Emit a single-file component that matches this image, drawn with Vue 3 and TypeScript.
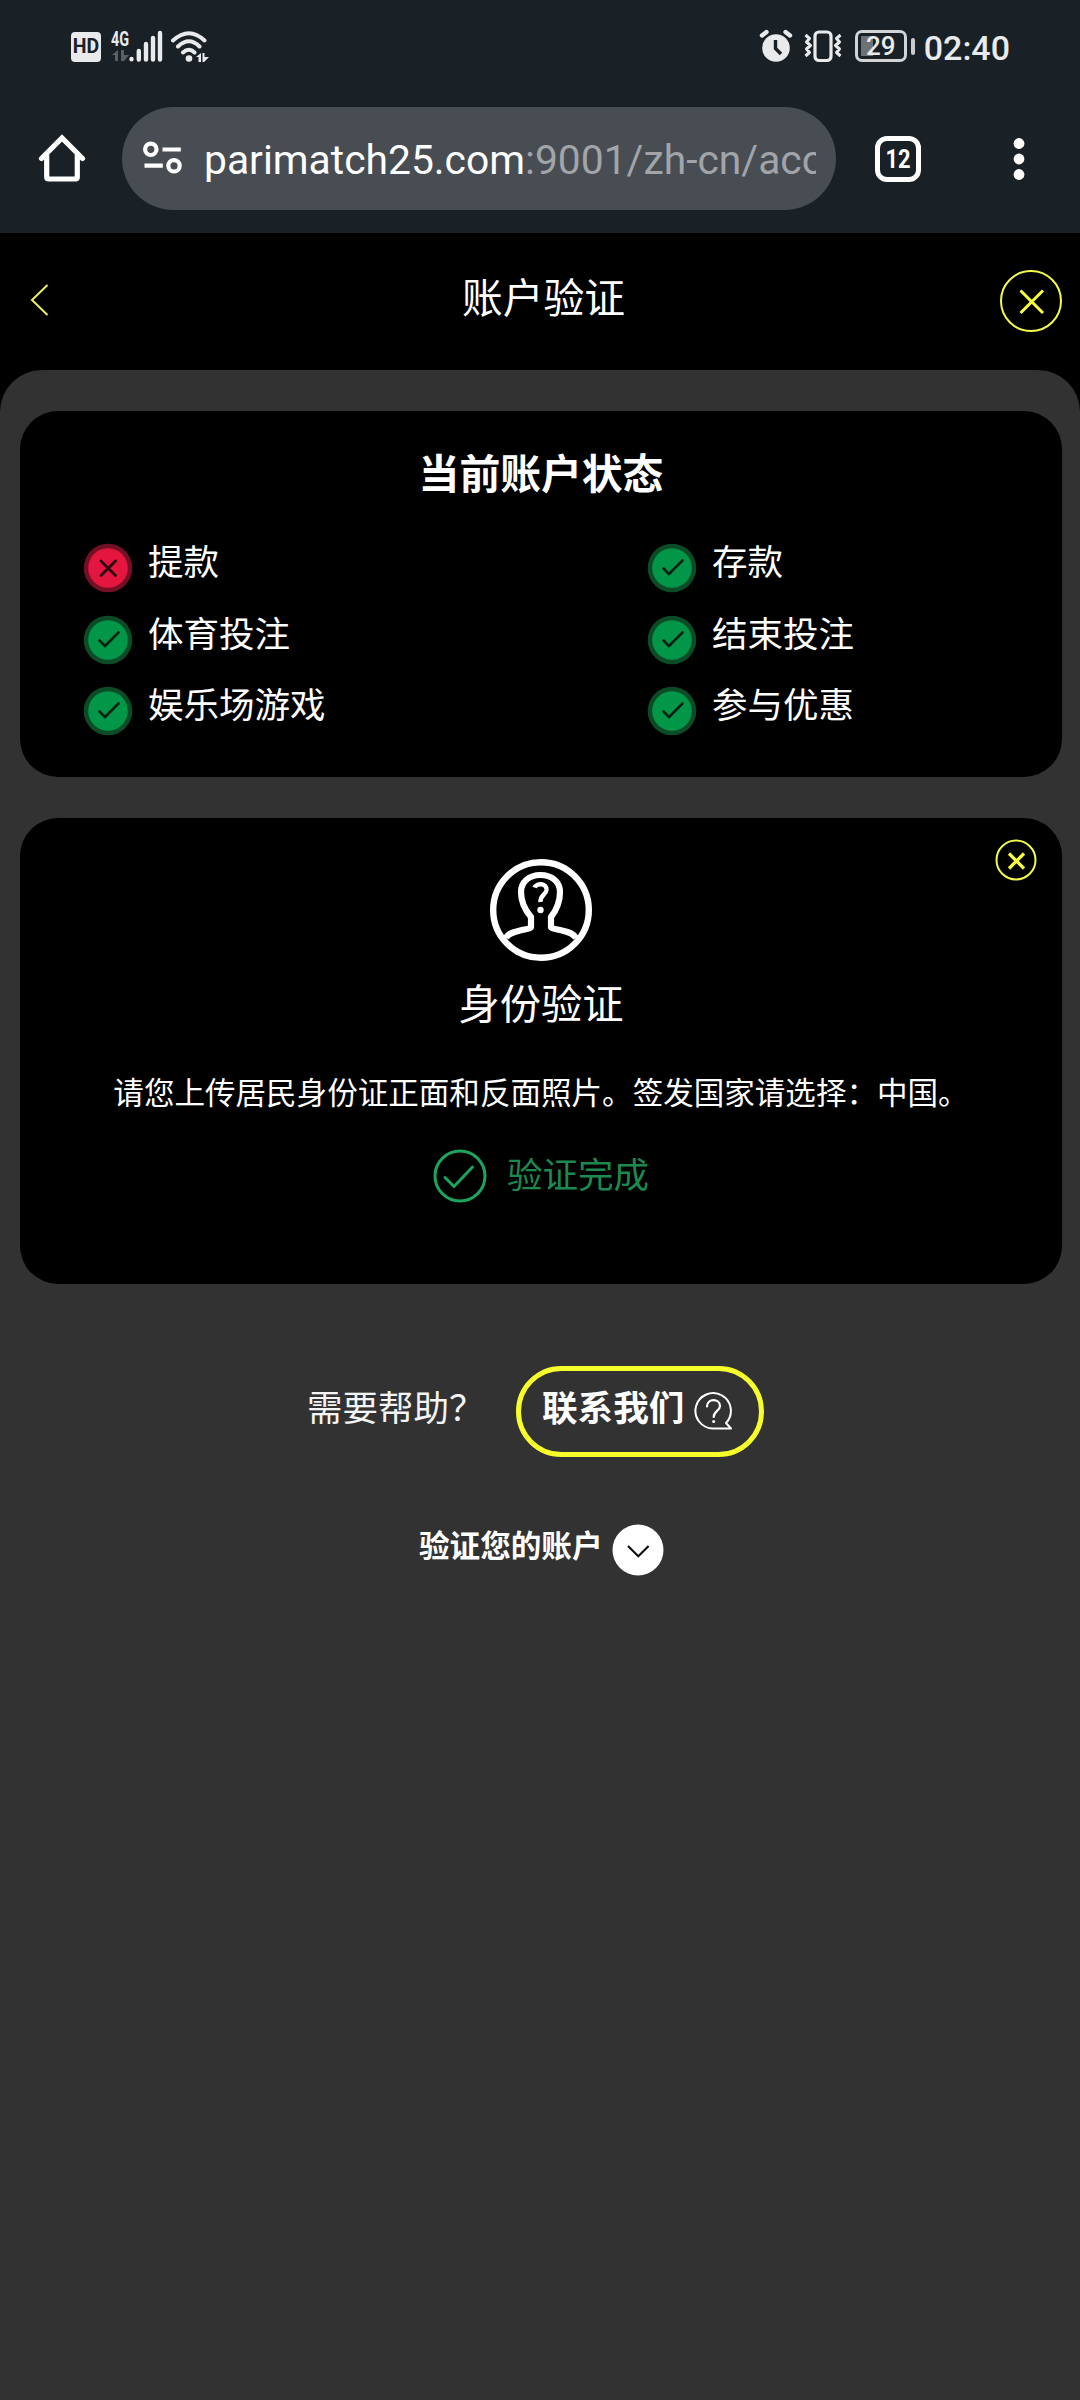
<script setup lang="ts">
interface StatusItem {
  label: string
  allowed: boolean
}

const statusItems: StatusItem[] = [
  { label: '提款', allowed: false },
  { label: '存款', allowed: true },
  { label: '体育投注', allowed: true },
  { label: '结束投注', allowed: true },
  { label: '娱乐场游戏', allowed: true },
  { label: '参与优惠', allowed: true },
]
</script>

<template>
  <div class="screen" lang="zh-CN">
    <header class="chrome">
      <div class="status-bar">
        <div class="status-left">
          <span class="hd">HD</span>
          <div class="signal">
            <span class="network">4G</span>
            <svg width="52" height="34" viewBox="0 0 52 34">
              <g fill="#5b6065">
                <path d="M1 26l6-5v11H4v-6zM10 21h3v5h5l-5 6h-3z" />
              </g>
              <g stroke="#e8eaec" stroke-width="4.4" stroke-linecap="round">
                <path d="M20.5 30v.2M27.8 22v8.5M35 15v15.500M42 9v21.500M49 4v26.500" />
              </g>
            </svg>
          </div>
          <svg class="wifi" width="40" height="34" viewBox="0 0 40 34">
            <g fill="none" stroke="#e8eaec" stroke-width="4" stroke-linecap="round">
              <path d="M3 11.500Q19 -3 34.500 11.500M8 17.500Q19 7 29.500 17.500M13 23.500Q19 18 24.500 23.500" />
            </g>
            <circle cx="19" cy="29.500" r="3.300" fill="#e8eaec" />
            <path d="M26 28l5-4v9h-2.500v-5zM32.500 24h2v4h4.500l-5 5h-1.500z" fill="#e8eaec" />
          </svg>
        </div>
        <div class="status-right">
          <svg width="34" height="34" viewBox="0 0 34 34">
            <circle cx="17" cy="19" r="13.800" fill="#e8eaec" />
            <path d="M3 6.500L7.500 3M31 6.500L26.500 3" stroke="#e8eaec" stroke-width="4.400" stroke-linecap="round" />
            <path d="M16.500 11v8.500l5.500 5.500" fill="none" stroke="#192127" stroke-width="3.400" />
          </svg>
          <svg class="vibrate" width="40" height="34" viewBox="0 0 40 34">
            <rect x="12" y="3" width="16" height="28.500" rx="4" fill="none" stroke="#e8eaec" stroke-width="3.200" />
            <path
              d="M2.500 6l4 3.500-3 3.500 4 3.500-4 3.500 3 3.500-4 3.500M37.500 6l-4 3.500 3 3.500-4 3.500 4 3.500-3 3.500 4 3.500"
              fill="none"
              stroke="#e8eaec"
              stroke-width="3"
              stroke-linejoin="round"
            />
          </svg>
          <div class="battery">
            <span class="battery-text">29</span>
          </div>
          <span class="battery-knob"></span>
          <span class="clock">02:40</span>
        </div>
      </div>

      <div class="toolbar">
        <svg class="home" width="48" height="48" viewBox="0 0 48 48">
          <path
            d="M3.500 24.500L24 4l20.500 20.500M8.700 20v23q0 2 2 2h26.600q2 0 2-2V20"
            fill="none"
            stroke="#fff"
            stroke-width="5.200"
            stroke-linecap="round"
          />
        </svg>
        <div class="omnibox">
          <svg class="tune" width="40" height="36" viewBox="0 0 40 36">
            <g fill="none" stroke="#fff" stroke-width="4.200">
              <circle cx="8.800" cy="9.300" r="5.700" />
              <circle cx="32" cy="25.800" r="5.700" />
              <path d="M20.500 9.500h18.300M2.500 25.700h18.300" />
            </g>
          </svg>
          <div class="url">
            <span class="host">parimatch25.com</span>
            <span class="path">:9001/zh-cn/acc</span>
          </div>
        </div>
        <div class="tabs"><span class="tab-count">12</span></div>
        <svg class="menu" width="12" height="44" viewBox="0 0 12 44">
          <g fill="#fff">
            <circle cx="6" cy="6.500" r="5.400" />
            <circle cx="6" cy="22" r="5.400" />
            <circle cx="6" cy="37.500" r="5.400" />
          </g>
        </svg>
      </div>
    </header>

    <div class="page-head">
      <svg class="back" width="20" height="34" viewBox="0 0 20 34">
        <path d="M17.500 2L2 17l15.500 15" fill="none" stroke="#e9f05a" stroke-width="2" />
      </svg>
      <h1>账户验证</h1>
      <svg class="close-lg" width="64" height="64" viewBox="0 0 64 64">
        <circle cx="32" cy="32" r="30" fill="none" stroke="#f3fa4c" stroke-width="2" />
        <path d="M21.500 21.500L44 44M44 21.500L21.500 44" stroke="#f8ff3c" stroke-width="3" />
      </svg>
    </div>

    <main class="panel">
      <section class="card status-card">
        <h2>当前账户状态</h2>
        <ul class="status-grid">
          <li v-for="item in statusItems" :key="item.label">
            <svg width="50" height="50" viewBox="0 0 50 50">
              <template v-if="item.allowed">
                <circle cx="25" cy="25" r="24.300" fill="#0b4c27" />
                <circle cx="25" cy="25" r="19.800" fill="#029748" />
                <path
                  d="M16.500 25.500l5.500 5.500 13.500-13.500"
                  fill="none"
                  stroke="#06200f"
                  stroke-width="2.600"
                  stroke-linecap="round"
                  stroke-linejoin="round"
                />
              </template>
              <template v-else>
                <circle cx="25" cy="25" r="24.300" fill="#741023" />
                <circle cx="25" cy="25" r="19.800" fill="#e4163f" />
                <path
                  d="M18 18l14.500 14.500M32.500 18L18 32.500"
                  stroke="#2a060d"
                  stroke-width="2.800"
                  stroke-linecap="round"
                />
              </template>
            </svg>
            <span>{{ item.label }}</span>
          </li>
        </ul>
      </section>

      <section class="card identity-card">
        <svg class="close-sm" width="42" height="42" viewBox="0 0 42 42">
          <circle cx="21" cy="21" r="19.500" fill="none" stroke="#f3fa4c" stroke-width="2" />
          <path d="M14 14.500L29 29.500M29 14.500L14 29.500" stroke="#f8ff3c" stroke-width="3.200" />
        </svg>
        <svg class="avatar" width="104" height="104" viewBox="0 0 104 104">
          <g fill="none" stroke="#fff">
            <circle cx="52" cy="52" r="47.800" stroke-width="6.400" />
            <path
              d="M17 80C19 75 25 74 31 72.500C37 71 42 70.500 42 69V59C36 52 32 44 32 34C32 24 40 17 51.500 17S71 24 71 34C71 44 67.500 52 62 59V69C62 70.500 67 71 73 72.500C79 74 84 75 87 80"
              stroke-width="6.200"
            />
            <path
              d="M45.500 29.500C47 25 58 24.500 57.500 32C57 37 51 37 51.500 44"
              stroke-width="4.400"
            />
          </g>
          <circle cx="51.500" cy="52" r="3.200" fill="#fff" />
        </svg>
        <h3>身份验证</h3>
        <p class="note">请您上传居民身份证正面和反面照片。签发国家请选择：中国。</p>
        <div class="verified">
          <svg width="54" height="54" viewBox="0 0 54 54">
            <circle cx="27" cy="27" r="25" fill="none" stroke="#1ca45c" stroke-width="3" />
            <path
              d="M12 28.500l9 9L39.500 18"
              fill="none"
              stroke="#1ca45c"
              stroke-width="3"
              stroke-linecap="round"
              stroke-linejoin="round"
            />
          </svg>
          <span>验证完成</span>
        </div>
      </section>

      <div class="help">
        <span class="help-label">需要帮助？</span>
        <button class="contact" type="button">
          <span>联系我们</span>
          <svg width="38" height="38" viewBox="0 0 38 38">
            <g fill="none" stroke="#fff" stroke-width="2" stroke-linejoin="round" stroke-linecap="round">
              <path d="M19 36.500A17.700 17.700 0 1 1 32 31L37 36.500Z" />
              <path d="M13 14.500C13 6 26 6 26 14C26 19 19.700 19 19.700 25" stroke-width="2.200" />
            </g>
            <circle cx="19.700" cy="29.500" r="1.500" fill="#fff" />
          </svg>
        </button>
      </div>

      <div class="expand">
        <span>验证您的账户</span>
        <svg width="52" height="52" viewBox="0 0 52 52">
          <circle cx="26" cy="26" r="25.500" fill="#fff" />
          <path d="M16 22l10.300 10.300L36.600 22" fill="none" stroke="#111" stroke-width="2.200" />
        </svg>
      </div>
    </main>
  </div>
</template>

<style>
body {
  margin: 0;
  background: #323232;
}
</style>

<style scoped>
.screen {
  width: 1080px;
  height: 2400px;
  overflow: hidden;
  display: flex;
  flex-direction: column;
  background: #000;
  color: #fff;
  font-family: Roboto, 'Noto Sans CJK SC', sans-serif;
}

h1,
h2,
h3,
p,
ul {
  margin: 0;
  padding: 0;
  font-weight: 400;
}

svg {
  display: block;
  flex: none;
}

.chrome {
  height: 233px;
  background: #192127;
}

.status-bar {
  height: 77px;
  box-sizing: border-box;
  padding: 29px 70px 0 71px;
  display: flex;
  justify-content: space-between;
  color: #e8eaec;
}

.status-left,
.status-right {
  display: flex;
  align-items: flex-start;
}

.hd {
  width: 30px;
  height: 30px;
  margin-top: 3px;
  border-radius: 4px;
  background: #e8eaec;
  color: #192127;
  font-size: 19.5px;
  font-weight: 700;
  line-height: 30px;
  text-align: center;
}

.signal {
  position: relative;
  margin-left: 10px;
}

.network {
  position: absolute;
  left: 0;
  top: 0;
  font-size: 20px;
  font-weight: 700;
  line-height: 20px;
  transform: scaleX(0.72);
  transform-origin: 0 0;
}

.wifi {
  margin-left: 7px;
}

.vibrate {
  margin-left: 10px;
}

.battery {
  width: 52px;
  height: 32px;
  margin: 1px 0 0 12px;
  box-sizing: border-box;
  border: 3px solid #d2d4d6;
  border-radius: 7px;
  background: linear-gradient(#6d7276, #6d7276) 3px 3px / 12px 20px no-repeat;
  text-align: center;
}

.battery-text {
  font-size: 26px;
  font-weight: 500;
  line-height: 26px;
  display: block;
}

.battery-knob {
  width: 4px;
  height: 17px;
  margin: 9px 0 0 4px;
  border-radius: 2px;
  background: #c9cbcd;
}

.clock {
  margin: 1px 0 0 9px;
  font-size: 34px;
  font-weight: 500;
  line-height: 36px;
}

.toolbar {
  height: 163px;
  box-sizing: border-box;
  padding: 30px 54px 0 38px;
  display: flex;
  align-items: flex-start;
}

.home {
  margin-top: 27px;
}

.omnibox {
  width: 714px;
  height: 103px;
  margin-left: 36px;
  box-sizing: border-box;
  padding: 0 20px 0 20px;
  border-radius: 52px;
  background: #484c53;
  display: flex;
  align-items: center;
}

.tune {
  margin-top: -1px;
}

.url {
  flex: 1;
  min-width: 0;
  margin-left: 22px;
  display: flex;
  overflow: hidden;
  white-space: nowrap;
  font-size: 40.8px;
  line-height: 60px;
  padding-top: 2px;
}

.host {
  color: #fff;
}

.path {
  flex: 1;
  min-width: 0;
  overflow: hidden;
  color: #a1a5a9;
}

.tabs {
  width: 46px;
  height: 46px;
  margin: 28.5px 0 0 38.5px;
  box-sizing: border-box;
  border: 5.5px solid #fff;
  border-radius: 12px;
  display: flex;
  align-items: center;
  justify-content: center;
}

.tab-count {
  font-size: 26px;
  font-weight: 700;
  line-height: 30px;
  transform: scaleX(0.84);
}

.menu {
  margin: 30px 0 0 92.5px;
}

.page-head {
  height: 137px;
  box-sizing: border-box;
  padding: 0 17px 0 30px;
  display: flex;
  align-items: flex-start;
  justify-content: space-between;
}

.back {
  margin-top: 50px;
  margin-right: 38px;
}

h1 {
  margin-top: 36px;
  font-size: 40.8px;
  line-height: 60px;
}

.close-lg {
  margin-top: 36px;
}

.panel {
  flex: 1;
  padding: 41px 18px 0 20px;
  border-radius: 42px 42px 0 0;
  background: #323232;
}

.card {
  position: relative;
  box-sizing: border-box;
  border-radius: 38px;
  background: #000;
}

.status-card {
  height: 366px;
  padding: 34px 62px 0;
}

h2 {
  font-size: 40.8px;
  font-weight: 700;
  line-height: 60px;
  text-align: center;
}

.status-grid {
  margin-top: 33px;
  list-style: none;
  display: grid;
  grid-template-columns: 564px 1fr;
  grid-auto-rows: 71.5px;
}

.status-grid li {
  display: flex;
  align-items: flex-start;
}

.status-grid svg {
  margin: 5px 0 0 0.5px;
}

.status-grid span {
  margin-left: 15.5px;
  font-size: 35.5px;
  line-height: 50px;
}

.identity-card {
  height: 466px;
  margin-top: 41px;
  padding-top: 40px;
  display: flex;
  flex-direction: column;
  align-items: center;
}

.close-sm {
  position: absolute;
  top: 21px;
  right: 25.5px;
}

h3 {
  margin-top: 13px;
  font-size: 41.3px;
  line-height: 60px;
}

.note {
  margin-top: 37px;
  font-size: 30.55px;
  line-height: 44px;
  white-space: nowrap;
}

.verified {
  margin-top: 32.5px;
  display: flex;
  align-items: center;
  gap: 20px;
  color: #1c8a50;
  font-size: 35.5px;
  line-height: 50px;
}

.help {
  margin-top: 82px;
  padding-left: 287px;
  display: flex;
  align-items: flex-start;
}

.help-label {
  width: 209px;
  margin-top: 18px;
  font-size: 35.5px;
  line-height: 50px;
  color: #f4f4f4;
}

.contact {
  width: 248px;
  height: 91px;
  box-sizing: border-box;
  padding: 13px 0 0 21px;
  border: 5px solid #f6ff2b;
  border-radius: 46px;
  background: none;
  color: #fff;
  font: inherit;
  font-size: 35.6px;
  font-weight: 700;
  line-height: 50px;
  display: flex;
  align-items: flex-start;
  gap: 10px;
}

.contact svg {
  margin-top: 8px;
}

.expand {
  margin-top: 67px;
  padding-left: 399px;
  display: flex;
  align-items: flex-start;
  gap: 9.5px;
  font-size: 30.6px;
  font-weight: 700;
  line-height: 46px;
}
</style>
